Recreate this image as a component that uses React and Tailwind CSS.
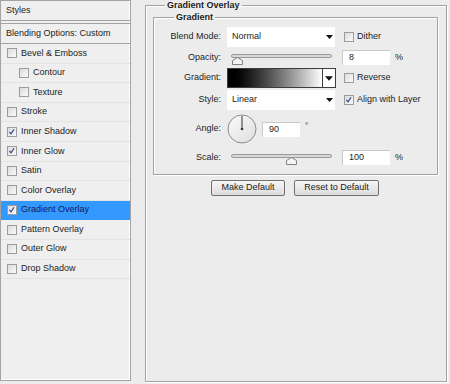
import React from "react";

const font = { fontFamily: '"Liberation Sans", Arial, sans-serif' };

function Check({ checked }) {
  return (
    <span className="relative inline-block w-[10px] h-[10px] border border-[#9c9c9c] bg-gradient-to-br from-[#dcdcdc] to-[#fafafa] shrink-0">
      {checked && (
        <svg viewBox="0 0 10 10" className="absolute left-0 top-0 w-[8px] h-[8px]">
          <path d="M1.8 4.8 L3.8 7.2 L7.6 1.6" fill="none" stroke="#2b3a8f" strokeWidth="1.4" />
        </svg>
      )}
    </span>
  );
}

const items = [
  { label: "Bevel & Emboss" },
  { label: "Contour", sub: true },
  { label: "Texture", sub: true },
  { label: "Stroke" },
  { label: "Inner Shadow", checked: true },
  { label: "Inner Glow", checked: true },
  { label: "Satin" },
  { label: "Color Overlay" },
  { label: "Gradient Overlay", checked: true, active: true },
  { label: "Pattern Overlay" },
  { label: "Outer Glow" },
  { label: "Drop Shadow" },
];

function Dropdown({ value }) {
  return (
    <div className="w-[108px] h-[20px] bg-white flex items-center justify-between pl-[5px] pr-[2px]">
      <span>{value}</span>
      <svg viewBox="0 0 7 4" className="w-[7px] h-[4px]">
        <path d="M0 0 H7 L3.5 4 Z" fill="#111" />
      </svg>
    </div>
  );
}

function Slider({ pos }) {
  return (
    <div className="relative w-[101px] h-[14px] ml-[4px]">
      <div className="absolute left-0 right-0 top-[3px] h-[4px] rounded-[2px] border border-[#9a9a9a] bg-[#d8d8d8]" />
      <svg viewBox="0 0 11 8" className="absolute top-[6px] w-[11px] h-[8px]" style={{ left: pos }}>
        <path d="M0.5 7.5 V3.5 L5.5 0.5 L10.5 3.5 V7.5 Z" fill="#f4f4f4" stroke="#808080" />
      </svg>
    </div>
  );
}

function Field({ value, w = "w-[48px]" }) {
  return (
    <div className={`${w} h-[15px] bg-white border-t border-l border-[#c8c8c8] flex items-center pl-[6px]`}>
      {value}
    </div>
  );
}

function Label({ children }) {
  return <div className="w-[68px] text-right pr-[1px] shrink-0">{children}</div>;
}

export default function App() {
  return (
    <div className="w-[450px] h-[384px] bg-[#ececec] flex text-[9px] text-[#1c1c1c]" style={font}>
      <div className="w-[131px] h-[381px] border border-[#a3a3a3] bg-[#efefef] flex flex-col shadow-[inset_-1px_-1px_0_#fff]">
        <div className="h-[20px] border-b border-[#a3a3a3] flex items-center px-[5px]">Styles</div>
        <div className="h-[21px] mt-[2px] border-t border-b border-[#a3a3a3] flex items-center px-[5px]">
          Blending Options: Custom
        </div>
        {items.map((it) => (
          <div
            key={it.label}
            className={`h-[19.6px] flex items-center border-b ${
              it.active ? "bg-[#3399ff] border-[#3399ff] text-[#10185a]" : "border-[#e3e3e3]"
            } ${it.sub ? "pl-[18px]" : "pl-[6px]"}`}
          >
            <Check checked={it.checked} />
            <span className="ml-[4px]">{it.label}</span>
          </div>
        ))}
      </div>

      <fieldset className="ml-[14px] mr-[3px] w-[302px] h-[382px] border border-[#a3a3a3] shadow-[inset_1px_1px_0_#fff,1px_1px_0_#fff] px-[7px]">
        <legend className="ml-[12px] px-[2px] font-bold text-[9px] leading-[11px]">Gradient Overlay</legend>
        <fieldset className="border border-[#a3a3a3] shadow-[inset_1px_1px_0_#fff,1px_1px_0_#fff] pb-[9px] mr-[1px]">
          <legend className="ml-[20px] px-[2px] font-bold text-[9px] leading-[12px]">Gradient</legend>

          <div className="flex items-center h-[20px] mt-[4px]">
            <Label>Blend Mode:</Label>
            <div className="ml-[5px]">
              <Dropdown value="Normal" />
            </div>
            <div className="ml-[9px] flex items-center">
              <Check />
              <span className="ml-[3px]">Dither</span>
            </div>
          </div>

          <div className="flex items-center h-[15px] mt-[3px]">
            <Label>Opacity:</Label>
            <div className="ml-[5px] w-[108px]">
              <Slider pos={1} />
            </div>
            <div className="ml-[7px]">
              <Field value="8" />
            </div>
            <span className="ml-[5px]">%</span>
          </div>

          <div className="flex items-center h-[20px] mt-[3px]">
            <Label>Gradient:</Label>
            <div className="ml-[5px] w-[109px] h-[20px] border border-[#3c3c3c] flex">
              <div className="flex-1 bg-gradient-to-r from-black to-white" />
              <div className="w-[13px] border-l border-[#3c3c3c] bg-white flex items-center justify-center">
                <svg viewBox="0 0 7 4" className="w-[8px] h-[5px]">
                  <path d="M0 0 H7 L3.5 4 Z" fill="#111" />
                </svg>
              </div>
            </div>
            <div className="ml-[8px] flex items-center">
              <Check />
              <span className="ml-[3px]">Reverse</span>
            </div>
          </div>

          <div className="flex items-center h-[20px] mt-[2px]">
            <Label>Style:</Label>
            <div className="ml-[5px]">
              <Dropdown value="Linear" />
            </div>
            <div className="ml-[9px] flex items-center">
              <Check checked />
              <span className="ml-[3px]">Align with Layer</span>
            </div>
          </div>

          <div className="flex items-center h-[30px] mt-[4px]">
            <Label>Angle:</Label>
            <svg viewBox="0 0 30 30" className="ml-[5px] w-[30px] h-[30px]">
              <defs>
                <linearGradient id="dial" x1="0" y1="0" x2="1" y2="1">
                  <stop offset="0" stopColor="#fafafa" />
                  <stop offset="1" stopColor="#dedede" />
                </linearGradient>
              </defs>
              <circle cx="15" cy="15" r="14" fill="url(#dial)" stroke="#8c8c8c" />
              <line x1="15" y1="15" x2="15" y2="2" stroke="#333" strokeWidth="1" />
              <circle cx="15" cy="15" r="1.3" fill="#333" />
            </svg>
            <div className="ml-[5px]">
              <Field value="90" w="w-[38px]" />
            </div>
            <span className="ml-[5px] -mt-[6px] text-[8px]">°</span>
          </div>

          <div className="flex items-center h-[15px] mt-[6px]">
            <Label>Scale:</Label>
            <div className="ml-[5px] w-[108px]">
              <Slider pos={55} />
            </div>
            <div className="ml-[7px]">
              <Field value="100" />
            </div>
            <span className="ml-[5px]">%</span>
          </div>
        </fieldset>

        <div className="flex mt-[5px] ml-[58px] gap-[9px]">
          <button className="w-[74px] h-[16px] border border-[#707070] rounded-[2px] bg-gradient-to-b from-[#f6f6f6] to-[#dcdcdc] text-[9px]">
            Make Default
          </button>
          <button className="w-[85px] h-[16px] border border-[#707070] rounded-[2px] bg-gradient-to-b from-[#f6f6f6] to-[#dcdcdc] text-[9px]">
            Reset to Default
          </button>
        </div>
      </fieldset>
    </div>
  );
}
